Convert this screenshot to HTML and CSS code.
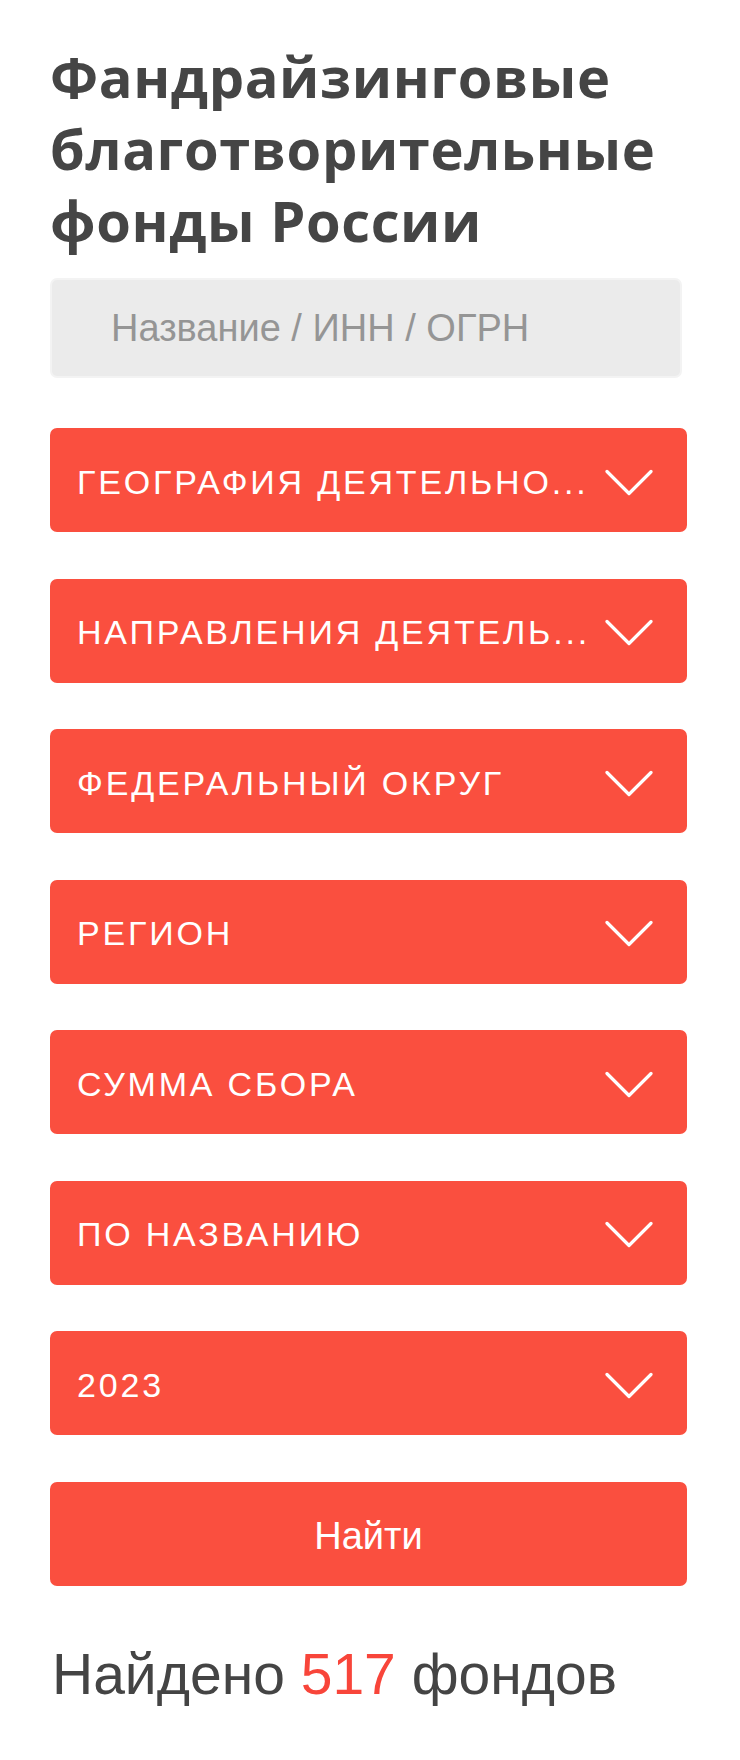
FILE: index.html
```html
<!DOCTYPE html>
<html lang="ru">
<head>
<meta charset="utf-8">
<title>Фандрайзинговые благотворительные фонды России</title>
<link rel="stylesheet" href="styles.css">
</head>
<body>
<main class="page">
  <h1 class="title">Фандрайзинговые благотворительные фонды России</h1>
  <div class="search">
    <input class="search-input" type="text" placeholder="Название / ИНН / ОГРН">
  </div>
  <div class="filters">
    <div class="select"><span class="select-label">География деятельно...</span><svg class="chev" viewBox="0 0 48 26"><path d="M2 2 L24 24 L46 2"/></svg></div>
    <div class="select"><span class="select-label">Направления деятель...</span><svg class="chev" viewBox="0 0 48 26"><path d="M2 2 L24 24 L46 2"/></svg></div>
    <div class="select"><span class="select-label">Федеральный округ</span><svg class="chev" viewBox="0 0 48 26"><path d="M2 2 L24 24 L46 2"/></svg></div>
    <div class="select"><span class="select-label">Регион</span><svg class="chev" viewBox="0 0 48 26"><path d="M2 2 L24 24 L46 2"/></svg></div>
    <div class="select"><span class="select-label">Сумма сбора</span><svg class="chev" viewBox="0 0 48 26"><path d="M2 2 L24 24 L46 2"/></svg></div>
    <div class="select"><span class="select-label">По названию</span><svg class="chev" viewBox="0 0 48 26"><path d="M2 2 L24 24 L46 2"/></svg></div>
    <div class="select"><span class="select-label">2023</span><svg class="chev" viewBox="0 0 48 26"><path d="M2 2 L24 24 L46 2"/></svg></div>
    <button class="submit" type="button">Найти</button>
  </div>
  <p class="found">Найдено <span class="count">517</span> фондов</p>
</main>
</body>
</html>
```
FILE: styles.css
```css
html, body {
  margin: 0;
  padding: 0;
  background: #ffffff;
}
body {
  font-family: "Open Sans", "Liberation Sans", sans-serif;
  color: #444444;
}
.page {
  width: 637px;
  padding: 0 0 0 50px;
  box-sizing: content-box;
}
.title {
  margin: 40px 0 0 0;
  font-family: "Open Sans", sans-serif;
  font-weight: 700;
  font-size: 56px;
  line-height: 72px;
  letter-spacing: 0.6px;
  color: #454545;
}
.search {
  margin-top: 22px;
  width: 632px;
}
.search-input {
  display: block;
  box-sizing: border-box;
  width: 632px;
  height: 100px;
  margin: 0;
  padding: 0 0 0 59px;
  border: 2px solid #f3f3f3;
  border-radius: 7px;
  background: #ebebeb;
  font-family: "Liberation Sans", sans-serif;
  font-size: 38px;
  color: #444;
  outline: none;
}
.search-input::placeholder {
  color: #959595;
}
.filters {
  margin-top: 50px;
  display: flex;
  flex-direction: column;
  gap: 46.5px;
}
.select {
  height: 104px;
  box-sizing: border-box;
  background: #fa4f3f;
  border-radius: 7px;
  display: flex;
  align-items: center;
  justify-content: space-between;
  padding: 4px 34px 0 27px;
}
.select-label {
  font-family: "Liberation Sans", sans-serif;
  font-size: 34px;
  letter-spacing: 2.8px;
  text-transform: uppercase;
  color: #ffffff;
  white-space: nowrap;
}
.chev {
  width: 48px;
  height: 27px;
  fill: none;
  stroke: #ffffff;
  stroke-width: 3.2;
  stroke-linecap: round;
  stroke-linejoin: round;
  margin-top: 0;
}
.submit {
  height: 104px;
  border: none;
  border-radius: 7px;
  background: #fa4f3f;
  color: #ffffff;
  font-family: "Liberation Sans", sans-serif;
  font-size: 38px;
  padding: 6px 0 0;
  cursor: pointer;
}
.found {
  margin: 54px 0 0 2px;
  font-family: "Liberation Sans", sans-serif;
  font-size: 57px;
  line-height: 1.2;
  color: #444444;
}
.count {
  color: #f8453a;
}
```
